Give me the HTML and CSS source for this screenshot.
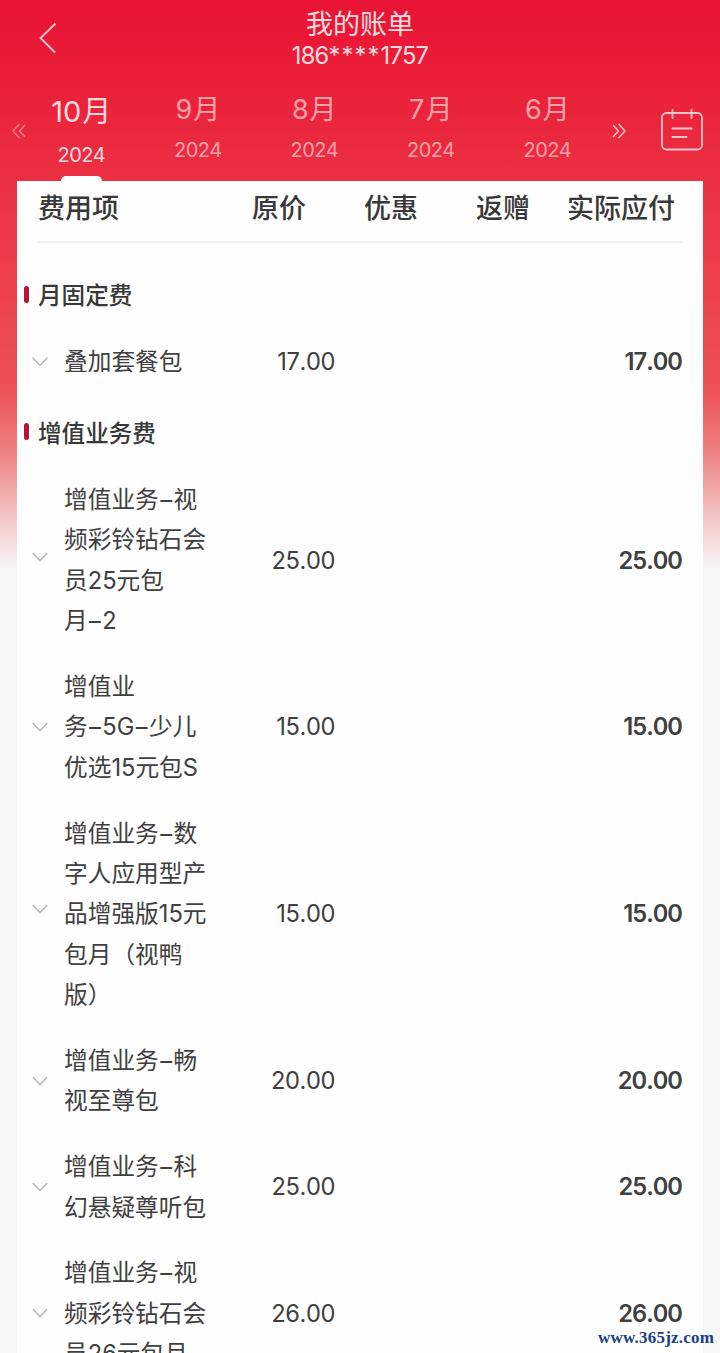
FILE: index.html
```html
<!DOCTYPE html>
<html lang="zh-CN">
<head>
    <meta charset="UTF-8">
    <title>我的账单</title>
    <link rel="stylesheet" href="styles.css">
</head>
<body>
    <header class="top-bar">
        <svg class="back" width="18" height="32" viewBox="0 0 18 32"><path d="M16.500 1.500L1.500 16l14.500 14.500"/></svg>
        <div class="heading">
            <h1>我的账单</h1>
            <div class="phone">186<span class="mask">****</span>1757</div>
        </div>
    </header>

    <nav class="months">
        <svg class="arrow arrow-prev" width="14" height="16" viewBox="0 0 14 16"><path d="M7.500 1L1 8l6.500 7M13 2L7.500 8l5.500 6"/></svg>
        <div class="tabs">
            <div class="tab active"><span class="month">10<span class="unit">月</span></span><span class="year">2024</span></div>
            <div class="tab"><span class="month">9<span class="unit">月</span></span><span class="year">2024</span></div>
            <div class="tab"><span class="month">8<span class="unit">月</span></span><span class="year">2024</span></div>
            <div class="tab"><span class="month">7<span class="unit">月</span></span><span class="year">2024</span></div>
            <div class="tab"><span class="month">6<span class="unit">月</span></span><span class="year">2024</span></div>
        </div>
        <svg class="arrow arrow-next" width="14" height="16" viewBox="0 0 14 16"><path d="M6.500 1L13 8l-6.500 7M1 2l5.500 6L1 14"/></svg>
        <svg class="calendar" width="42" height="42" viewBox="0 0 42 42"><rect x="1" y="4" width="40" height="36.500" rx="4.500"/><path d="M11.500 1v8M30.500 1v8M11.500 19.500h19M11.500 28h14"/></svg>
    </nav>

    <main class="bill">
        <div class="bill-head">
            <span>费用项</span>
            <span>原价</span>
            <span>优惠</span>
            <span>返赠</span>
            <span>实际应付</span>
        </div>

        <h2 class="group">月固定费</h2>
        <div class="fee">
            <svg class="chevron" width="16" height="10" viewBox="0 0 16 10"><path d="M.8 1L8 8.500L15.200 1"/></svg>
            <div class="name">叠加套餐包</div>
            <div class="price">17.00</div>
            <div class="total">17.00</div>
        </div>

        <h2 class="group">增值业务费</h2>
        <div class="fee">
            <svg class="chevron raised" width="16" height="10" viewBox="0 0 16 10"><path d="M.8 1L8 8.500L15.200 1"/></svg>
            <div class="name">增值业务<span class="dash">–</span>视<br>频彩铃钻石会<br>员25元包<br>月<span class="dash">–</span>2</div>
            <div class="price">25.00</div>
            <div class="total">25.00</div>
        </div>
        <div class="fee">
            <svg class="chevron" width="16" height="10" viewBox="0 0 16 10"><path d="M.8 1L8 8.500L15.200 1"/></svg>
            <div class="name">增值业<br>务<span class="dash">–</span>5G<span class="dash">–</span>少儿<br>优选15元包S</div>
            <div class="price">15.00</div>
            <div class="total">15.00</div>
        </div>
        <div class="fee">
            <svg class="chevron raised-more" width="16" height="10" viewBox="0 0 16 10"><path d="M.8 1L8 8.500L15.200 1"/></svg>
            <div class="name">增值业务<span class="dash">–</span>数<br>字人应用型产<br>品增强版15元<br>包月（视鸭<br>版）</div>
            <div class="price">15.00</div>
            <div class="total">15.00</div>
        </div>
        <div class="fee">
            <svg class="chevron" width="16" height="10" viewBox="0 0 16 10"><path d="M.8 1L8 8.500L15.200 1"/></svg>
            <div class="name">增值业务<span class="dash">–</span>畅<br>视至尊包</div>
            <div class="price">20.00</div>
            <div class="total">20.00</div>
        </div>
        <div class="fee">
            <svg class="chevron" width="16" height="10" viewBox="0 0 16 10"><path d="M.8 1L8 8.500L15.200 1"/></svg>
            <div class="name">增值业务<span class="dash">–</span>科<br>幻悬疑尊听包</div>
            <div class="price">25.00</div>
            <div class="total">25.00</div>
        </div>
        <div class="fee">
            <svg class="chevron" width="16" height="10" viewBox="0 0 16 10"><path d="M.8 1L8 8.500L15.200 1"/></svg>
            <div class="name">增值业务<span class="dash">–</span>视<br>频彩铃钻石会<br>员26元包月</div>
            <div class="price">26.00</div>
            <div class="total">26.00</div>
        </div>
    </main>

    <div class="watermark">www.365jz.com</div>
</body>
</html>
```
FILE: styles.css
```css
* {
    box-sizing: border-box;
}

body {
    margin: 0;
    position: relative;
    width: 720px;
    height: 1353px;
    overflow: hidden;
    font-family: Inter, "Noto Sans CJK SC", sans-serif;
    color: #404040;
    background: #f7f7f7 linear-gradient(#e81334 0, #ea2039 90px, #eb3044 180px, #ee3a48 240px, #ec5256 390px, #ef7f7f 450px, #f4bfbf 510px, #f7f7f7 570px) no-repeat;
}

svg {
    display: block;
    flex: none;
    fill: none;
}

.top-bar {
    display: grid;
    grid-template-columns: 80px 1fr 80px;
    height: 80px;
    color: #ffdbdf;
}

.back {
    margin: 22px 0 0 39px;
    stroke: #ffc9cf;
    stroke-width: 1.8;
}

.heading {
    padding-top: 7px;
    text-align: center;
}

h1 {
    margin: 0;
    font-size: 27px;
    line-height: 36px;
    font-weight: 400;
}

.phone {
    font-size: 23.7px;
    line-height: 26px;
    letter-spacing: -0.7px;
}

.mask {
    letter-spacing: 1.1px;
}

.months {
    display: flex;
    height: 101px;
    color: #ffa3aa;
}

.arrow {
    margin-top: 43px;
    stroke: #ffc5ca;
    stroke-width: 1.5;
}

.arrow-prev {
    margin-left: 12px;
    width: 14px;
    opacity: 0.55;
}

.tabs {
    display: flex;
    width: 583px;
    margin-left: -3px;
}

.tab {
    display: flex;
    flex-direction: column;
    align-items: center;
    width: 116.5px;
    padding-top: 12px;
}

.month {
    font-size: 27px;
    line-height: 36px;
}

.unit {
    margin-left: 1px;
}

.year {
    margin-top: 9px;
    font-size: 20px;
    line-height: 26px;
    letter-spacing: -0.5px;
}

.active {
    padding-top: 14px;
    color: #ffdbdf;
}

.active .month {
    font-size: 29px;
}

.active .year {
    margin-top: 12px;
}

.active::after {
    content: "";
    width: 41px;
    height: 5px;
    margin-top: 8px;
    border-radius: 5px 5px 0 0;
    background: #fff;
}

.arrow-next {
    margin-left: 6px;
}

.calendar {
    margin: 29px 0 0 35px;
    stroke: #ffc5ca;
    stroke-width: 1.8;
    stroke-linecap: round;
}

.bill {
    width: 686px;
    min-height: 1172px;
    margin-left: 17px;
    padding: 0 20px;
    background: #fefefe;
}

.bill-head {
    display: grid;
    grid-template-columns: 214px 112px 112px 91px 1fr;
    height: 62px;
    padding-left: 1px;
    border-bottom: 2px solid #f1f1f1;
    font-size: 27px;
    line-height: 56px;
    font-weight: 500;
    color: #383838;
}

.group {
    display: flex;
    align-items: center;
    gap: 9px;
    height: 66px;
    margin: 18px 0 1px -13px;
    font-size: 23.6px;
    font-weight: 500;
    color: #383838;
}

.group::before {
    content: "";
    width: 5px;
    height: 17px;
    border-radius: 3px;
    background: #b81238;
}

.fee + .group {
    margin-top: 5px;
}

.fee {
    display: grid;
    grid-template-columns: 32px 146px 125px 1fr;
    align-items: center;
    margin-left: -5px;
    padding: 14.2px 0 11.2px;
    font-size: 23.7px;
    line-height: 40.4px;
}

.name {
    white-space: nowrap;
}

.dash {
    margin: 0 1.4px;
}

.price,
.total {
    text-align: right;
    font-kerning: none;
    letter-spacing: -0.4px;
}

.total {
    padding-right: 1px;
    font-weight: 600;
    letter-spacing: -1px;
}

.chevron {
    margin-bottom: 1px;
    stroke: #b5b5b5;
    stroke-width: 1.4;
}

.raised {
    margin-bottom: 8px;
}

.raised-more {
    margin-bottom: 12px;
}

.watermark {
    position: absolute;
    right: 6px;
    bottom: 5px;
    font-family: "Liberation Serif", serif;
    font-size: 17px;
    line-height: 20px;
    font-weight: bold;
    letter-spacing: 0.2px;
    color: #1b3f86;
}
```
